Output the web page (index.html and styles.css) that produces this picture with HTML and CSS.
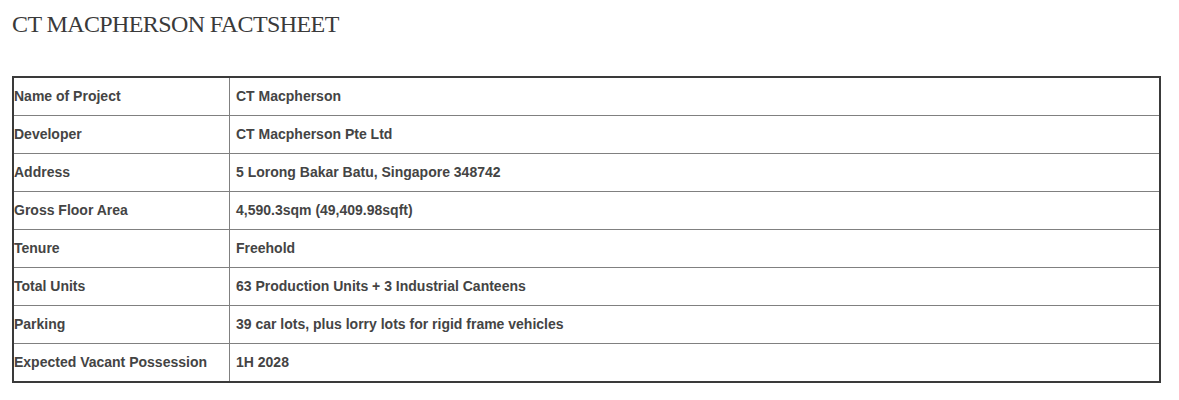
FILE: index.html
```html
<!DOCTYPE html>
<html>
<head>
<meta charset="utf-8">
<link rel="stylesheet" href="styles.css">
</head>
<body>
<div class="page">
  <h1 class="title">CT MACPHERSON FACTSHEET</h1>
  <table class="facts">
    <tr><td class="label">Name of Project</td><td class="value">CT Macpherson</td></tr>
    <tr><td class="label">Developer</td><td class="value">CT Macpherson Pte Ltd</td></tr>
    <tr><td class="label">Address</td><td class="value">5 Lorong Bakar Batu, Singapore 348742</td></tr>
    <tr><td class="label">Gross Floor Area</td><td class="value">4,590.3sqm (49,409.98sqft)</td></tr>
    <tr><td class="label">Tenure</td><td class="value">Freehold</td></tr>
    <tr><td class="label">Total Units</td><td class="value">63 Production Units + 3 Industrial Canteens</td></tr>
    <tr><td class="label">Parking</td><td class="value">39 car lots, plus lorry lots for rigid frame vehicles</td></tr>
    <tr><td class="label">Expected Vacant Possession</td><td class="value">1H 2028</td></tr>
  </table>
</div>
</body>
</html>
```
FILE: styles.css
```css
html, body {
  margin: 0;
  padding: 0;
  background: #ffffff;
}
.page {
  padding: 0 18px 0 12px;
}
.title {
  margin: 0;
  padding-top: 10px;
  font-family: "Liberation Serif", serif;
  font-weight: normal;
  font-size: 24px;
  line-height: 28px;
  color: #3a3a3a;
  letter-spacing: -0.6px;
}
.facts {
  margin-top: 38px;
  width: 1149px;
  border-collapse: collapse;
  border: 2px solid #3a3a3a;
  font-family: "Liberation Sans", Arial, sans-serif;
  font-size: 14px;
  font-weight: bold;
  color: #444444;
}
.facts td {
  border: 1px solid #808080;
  height: 36px;
  padding: 0 0 1px 0;
  vertical-align: middle;
}
.facts .label {
  width: 215px;
}
.facts .value {
  padding-left: 6px;
}
```
